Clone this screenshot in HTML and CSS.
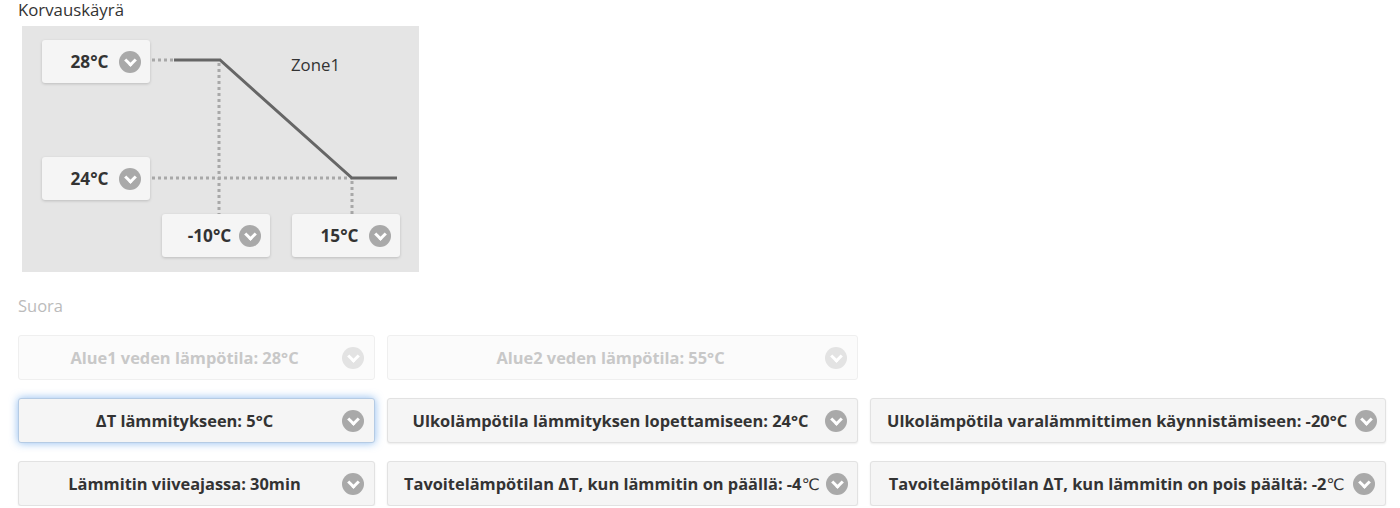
FILE: index.html
```
<!DOCTYPE html>
<html lang="fi">
<head>
  <meta charset="UTF-8">
  <title>Korvauskäyrä</title>
  <link rel="stylesheet" href="styles.css">
</head>
<body>
  <h2 class="section-title">Korvauskäyrä</h2>

  <!-- Käyrä ja sen säädöt -->
  <div class="curve">
    <svg class="curve-lines" width="397" height="246" viewBox="0 0 397 246">
      <g stroke="#a8a8a8" stroke-width="3" stroke-dasharray="3 3" fill="none">
        <line x1="130" y1="34" x2="152" y2="34"/>
        <line x1="130" y1="152" x2="330" y2="152"/>
        <line x1="197" y1="37" x2="197" y2="188"/>
        <line x1="330" y1="155" x2="330" y2="188"/>
      </g>
      <polyline points="152,34 198,34 330,152 375,152" stroke="#666" stroke-width="3" fill="none"/>
    </svg>
    <span class="zone-label">Zone1</span>

    <div class="pick pick-max"><span>28°C</span><i class="chev"></i></div>
    <div class="pick pick-min"><span>24°C</span><i class="chev"></i></div>
    <div class="pick pick-low"><span>-10°C</span><i class="chev"></i></div>
    <div class="pick pick-high"><span>15°C</span><i class="chev"></i></div>
  </div>

  <h2 class="section-title muted">Suora</h2>

  <div class="settings">
    <div class="select disabled"><span>Alue1 veden lämpötila: 28°C</span><i class="chev"></i></div>
    <div class="select disabled"><span>Alue2 veden lämpötila: 55°C</span><i class="chev"></i></div>
    <div></div>

    <div class="select focused"><span>ΔT lämmitykseen: 5°C</span><i class="chev"></i></div>
    <div class="select"><span>Ulkolämpötila lämmityksen lopettamiseen: 24°C</span><i class="chev"></i></div>
    <div class="select"><span>Ulkolämpötila varalämmittimen käynnistämiseen: -20°C</span><i class="chev"></i></div>

    <div class="select"><span>Lämmitin viiveajassa: 30min</span><i class="chev"></i></div>
    <div class="select"><span>Tavoitelämpötilan ΔT, kun lämmitin on päällä: -4<small>℃</small></span><i class="chev"></i></div>
    <div class="select"><span>Tavoitelämpötilan ΔT, kun lämmitin on pois päältä: -2<small>℃</small></span><i class="chev"></i></div>
  </div>
</body>
</html>
```

FILE: styles.css
```
* {
  box-sizing: border-box;
  margin: 0;
  padding: 0;
}

body {
  font-family: "Open Sans", Arial, sans-serif;
  color: #333;
  background-color: #fff;
  padding: 0 18px;
}

.section-title {
  font-size: 16.8px;
  font-weight: normal;
  line-height: 20px;
  color: #333;
}

.section-title.muted {
  font-size: 16.5px;
  color: #bbb;
  margin-top: 24px;
}

/* Käyrä */
.curve {
  position: relative;
  width: 397px;
  height: 246px;
  margin: 6px 0 0 4px;
  background-color: #e5e5e5;
}

.curve-lines {
  position: absolute;
  left: 0;
  top: 0;
}

.zone-label {
  position: absolute;
  left: 269px;
  top: 29px;
  font-size: 16.8px;
  line-height: 20px;
  color: #333;
}

.pick {
  position: absolute;
  width: 108px;
  height: 43px;
  display: flex;
  align-items: center;
  padding: 0 9px 0 14px;
  background-color: #f5f5f5;
  border-radius: 3px;
  box-shadow: 0 1px 3px rgba(0, 0, 0, 0.18);
  font-size: 17.2px;
  font-weight: bold;
}

.pick span {
  flex: 1;
  text-align: center;
  padding-left: 4px;
}

.pick-max { left: 20px; top: 14px; }
.pick-min { left: 20px; top: 131px; }
.pick-low { left: 140px; top: 188px; }
.pick-high { left: 270px; top: 188px; }

/* Nuoli-ikoni */
.chev {
  display: block;
  width: 22px;
  height: 22px;
  border-radius: 50%;
  background-color: #a9a9a9;
  position: relative;
  flex: none;
}

.chev::after {
  content: "";
  position: absolute;
  left: 7px;
  top: 5px;
  width: 6px;
  height: 6px;
  border-right: 3px solid #fff;
  border-bottom: 3px solid #fff;
  transform: rotate(45deg);
}

/* Asetukset */
.settings {
  display: grid;
  grid-template-columns: 357px 471px 516px;
  column-gap: 12px;
  row-gap: 18px;
  margin-top: 19px;
}

.select {
  height: 45px;
  display: flex;
  align-items: center;
  gap: 8px;
  padding: 0 10px 0 16px;
  background-color: #f5f5f5;
  border: 1px solid #e2e2e2;
  border-radius: 3px;
  box-shadow: 0 1px 2px rgba(0, 0, 0, 0.08);
  font-size: 16.4px;
  font-weight: bold;
  white-space: nowrap;
}

.select span {
  flex: 1;
  text-align: center;
}

.select small {
  font-size: 16px;
  font-weight: normal;
  font-family: "DejaVu Sans", sans-serif;
  letter-spacing: -1px;
}

.select.disabled {
  background-color: #fbfbfb;
  border-color: #efefef;
  color: #c8c8c8;
  box-shadow: none;
}

.select.disabled .chev {
  background-color: #e3e3e3;
}

.select.focused {
  border-color: #b5cbe4;
  box-shadow: 0 0 8px rgba(80, 150, 230, 0.65);
}
```
